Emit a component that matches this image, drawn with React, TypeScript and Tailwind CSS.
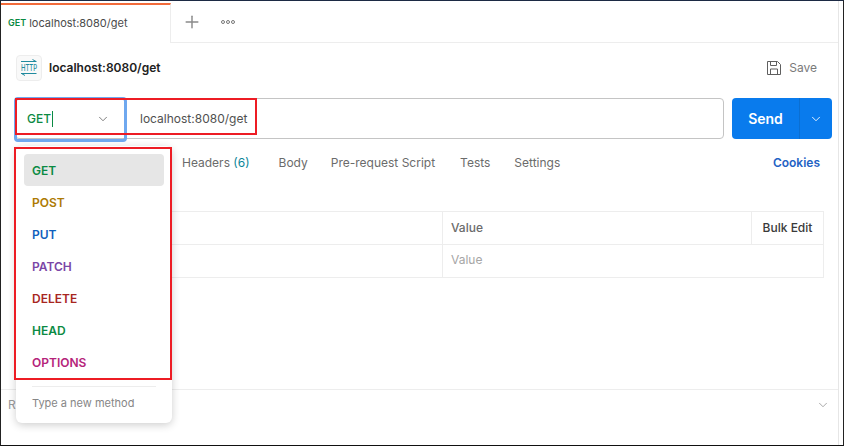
import { ChevronDown, Plus } from 'lucide-react'

const methods = [
  { label: 'GET', color: 'text-[#0b8a43]' },
  { label: 'POST', color: 'text-[#ad7a03]' },
  { label: 'PUT', color: 'text-[#0f5fbd]' },
  { label: 'PATCH', color: 'text-[#7b46a6]' },
  { label: 'DELETE', color: 'text-[#a8261f]' },
  { label: 'HEAD', color: 'text-[#0b8a43]' },
  { label: 'OPTIONS', color: 'text-[#b5237a]' },
]

const requestTabs = ['Headers', 'Body', 'Pre-request Script', 'Tests', 'Settings']

function tabSpacing(tab: string) {
  if (tab === 'Headers') return 'mr-[5px]'
  if (tab === 'Body') return '-mr-[1px]'
  if (tab === 'Pre-request Script') return 'mr-[1px]'
  return ''
}

function HttpIcon() {
  return (
    <div className="flex h-[26px] w-[26px] shrink-0 items-center justify-center rounded-[4px] border border-[#ededed] bg-[#f9f9f9]">
      <svg viewBox="0 0 18 18" className="h-[18px] w-[18px]" fill="none" stroke="#1f8a9e" strokeWidth="1">
        <path d="M1 2.5h15.5M12.5 0.5l3.5 2" />
        <path d="M1 14.5h15.5M5 16.5l-3.5 -2" />
        <text
          transform="translate(9 11.5) scale(1 1.5)"
          textAnchor="middle"
          fontSize="6"
          fontWeight="500"
          fill="#1f8a9e"
          stroke="none"
          fontFamily="Inter, sans-serif"
        >
          HTTP
        </text>
      </svg>
    </div>
  )
}

function SaveIcon() {
  return (
    <svg viewBox="0 0 16 16" className="h-[16px] w-[16px]" fill="none" stroke="#5f5f5f" strokeWidth="1">
      <path d="M1.5 1.5h10l3 3v10h-13z" />
      <path d="M4.5 1.5v4h6v-4" />
      <path d="M4.5 14.5v-5.5h7v5.5" />
    </svg>
  )
}

function MethodMenu() {
  return (
    <div className="absolute left-[15px] top-[145px] z-20 w-[156px] rounded-[6px] bg-white px-2 pt-2 shadow-[0_2px_8px_rgba(0,0,0,0.2)]">
      {methods.map((method, index) => (
        <div
          key={method.label}
          className={`flex h-8 items-center rounded-[4px] px-2 pt-[2px] text-xs font-semibold ${method.color} ${index === 0 ? 'bg-[#e6e6e6]' : ''}`}
        >
          {method.label}
        </div>
      ))}
      <div className="mx-2 mt-2 border-t border-[#ededed] pb-[11px] pt-[7px] text-[11px] leading-[18px] text-[#868686]">
        Type a new method
      </div>
    </div>
  )
}

export default function App() {
  return (
    <div className="relative h-[446px] w-[844px] overflow-hidden border-x border-b border-t border-x-[#222] border-b-[#111] border-t-[#1c2a44] bg-white font-['Inter',sans-serif] text-[#212121]">
      <div className="h-full w-[838px] border-r border-[#e6e6e6]">
        <div className="flex h-[42px] items-stretch">
          <div className="mt-[2px] flex w-[170px] items-center gap-[3px] border-r border-t-2 border-r-[#ededed] border-t-[#f26b3a] pb-[2px] pl-[7px]">
            <span className="text-[9px] font-semibold text-[#0b8a43]">GET</span>
            <span className="text-[11px] text-[#4a4a4a]">localhost:8080/get</span>
          </div>
          <div className="flex flex-1 items-center border-b border-[#ededed] pl-[11px]">
            <Plus className="h-5 w-5 text-[#8a8a8a]" strokeWidth={1.75} />
            <div className="ml-[19px] flex gap-[1px]">
              <span className="h-[4px] w-[4px] rounded-full border border-[#777]" />
              <span className="h-[4px] w-[4px] rounded-full border border-[#777]" />
              <span className="h-[4px] w-[4px] rounded-full border border-[#777]" />
            </div>
          </div>
        </div>

        <div className="flex h-[49px] items-center pl-[15px] pr-[21px]">
          <HttpIcon />
          <span className="ml-[7px] text-xs font-semibold">localhost:8080/get</span>
          <div className="ml-auto flex items-center gap-[7px] text-xs text-[#7a7a7a]">
            <SaveIcon />
            Save
          </div>
        </div>

        <div className="mt-[6px] flex h-[41px] pl-[14px] pr-[6px]">
          <div className="flex flex-1 items-center rounded-[4px] border border-[#c4c4c4]">
            <div className="flex w-[110px] items-center pl-[11px] pr-[16px]">
              <span className="border-r border-[#0b8a43] pr-px text-xs font-medium text-[#0b8a43]">GET</span>
              <ChevronDown className="ml-auto h-[14px] w-[14px] text-[#505050]" strokeWidth={1.25} />
            </div>
            <span className="pl-[14px] text-xs text-[#505050]">localhost:8080/get</span>
          </div>
          <div className="ml-2 flex w-[100px] rounded-[4px] bg-[#097bed] text-white">
            <span className="flex flex-1 items-center justify-center text-sm font-semibold">Send</span>
            <span className="flex w-[33px] items-center justify-center border-l border-[#0a6fd3]">
              <ChevronDown className="h-[14px] w-[14px]" strokeWidth={1.5} />
            </span>
          </div>
        </div>

        <div className="mt-[14px] flex h-[20px] items-center pl-[181px] pr-[18px] text-xs text-[#6b6b6b]">
          <div className="flex gap-[24px]">
            {requestTabs.map((tab) => (
              <span key={tab} className={tabSpacing(tab)}>
                {tab}
                {tab === 'Headers' && <span className="text-[#0c8599]"> (6)</span>}
              </span>
            ))}
          </div>
          <span className="ml-auto font-semibold text-[#1f62c4]">Cookies</span>
        </div>

        <div className="ml-[15px] mr-[14px] mt-[38px] border border-[#ededed] text-xs">
          <div className="flex h-[33px] items-center border-b border-[#ededed]">
            <div className="w-[426px] shrink-0 self-stretch border-r border-[#ededed]" />
            <div className="flex-1 pl-2 font-medium text-[#6b6b6b]">Value</div>
            <div className="flex w-[72px] shrink-0 items-center justify-center self-stretch border-l border-[#ededed] font-medium text-[#3a3a3a]">
              Bulk Edit
            </div>
          </div>
          <div className="flex h-[32px] items-center">
            <div className="w-[426px] shrink-0 self-stretch border-r border-[#ededed]" />
            <div className="pb-[2px] pl-2 text-[#a6a6a6]">Value</div>
          </div>
        </div>

        <div className="mt-[111px] flex h-[31px] items-center border-t border-[#ededed] pl-[7px] pr-[8px] text-xs text-[#9a9a9a]">
          R
          <ChevronDown className="ml-auto h-[14px] w-[14px] text-[#8a8a8a]" strokeWidth={1.25} />
        </div>
      </div>

      <MethodMenu />

      {/* annotations on top of the screenshot */}
      <div className="absolute left-[13px] top-[96px] z-30 h-[45px] w-[113px] rounded-[4px] border-[3px] border-[#6fa8ef]" />
      <div className="absolute left-[14px] top-[97px] z-40 h-[37px] w-[242px] border-2 border-[#ed1c24]" />
      <div className="absolute left-[13px] top-[146px] z-40 h-[233px] w-[158px] border-2 border-[#ed1c24]" />
    </div>
  )
}
